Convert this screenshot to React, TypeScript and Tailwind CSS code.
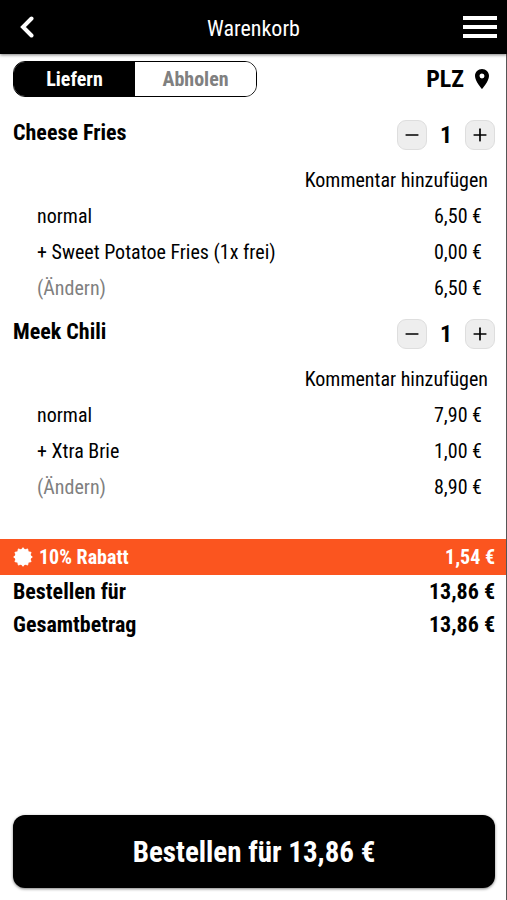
import { useState } from "react";
import { Minus, Plus } from "lucide-react";
import { MdLocationOn } from "react-icons/md";

type Line = { label: string; price: string; muted?: boolean };
type CartItem = { name: string; lines: Line[] };

const items: CartItem[] = [
  {
    name: "Cheese Fries",
    lines: [
      { label: "normal", price: "6,50 €" },
      { label: "+ Sweet Potatoe Fries (1x frei)", price: "0,00 €" },
      { label: "(Ändern)", price: "6,50 €", muted: true },
    ],
  },
  {
    name: "Meek Chili",
    lines: [
      { label: "normal", price: "7,90 €" },
      { label: "+ Xtra Brie", price: "1,00 €" },
      { label: "(Ändern)", price: "8,90 €", muted: true },
    ],
  },
];

const stepClass =
  "flex size-[30px] items-center justify-center rounded-[9px] border border-[#dedede] bg-[#eeeeee] text-black";

function Header() {
  return (
    <header className="relative z-10 flex h-[54px] items-center justify-between bg-black px-[10px] text-white shadow-[0_1px_3px_rgba(0,0,0,0.5)]">
      <button type="button" aria-label="Zurück" className="flex w-[34px] items-center justify-center">
        <svg width="16" height="22" viewBox="0 0 16 22" fill="none" stroke="currentColor" strokeWidth="4" strokeLinecap="round">
          <path d="M12.500 2.500 4 11l8.500 8.500" />
        </svg>
      </button>
      <h1 className="pt-1 text-[22px] leading-6">Warenkorb</h1>
      <button type="button" aria-label="Menü">
        <svg width="34" height="24" viewBox="0 0 34 24" fill="currentColor">
          <path d="M0 1h34v4H0zM0 10h34v4H0zM0 19h34v4H0z" />
        </svg>
      </button>
    </header>
  );
}

function Item({ item }: { item: CartItem }) {
  const [count, setCount] = useState(1);

  return (
    <section>
      <div className="flex items-start justify-between pr-[11px] pl-[13px]">
        <h2 className="text-[22px] leading-[26px] font-bold">{item.name}</h2>
        <div className="flex items-center">
          <button type="button" aria-label="Weniger" className={stepClass} onClick={() => setCount(Math.max(0, count - 1))}>
            <Minus size={20} strokeWidth={2} />
          </button>
          <span className="w-[38px] text-center text-2xl leading-[30px] font-bold">{count}</span>
          <button type="button" aria-label="Mehr" className={stepClass} onClick={() => setCount(count + 1)}>
            <Plus size={20} strokeWidth={2} />
          </button>
        </div>
      </div>
      <div className="mt-3 flex h-9 items-center justify-end pr-[18px]">
        <button type="button" className="text-xl leading-6">Kommentar hinzufügen</button>
      </div>
      <ul className="pr-6 pl-[37px] text-xl leading-9">
        {item.lines.map((line) => (
          <li key={line.label} className="flex justify-between">
            {line.muted ? (
              <button type="button" className="text-[#808080]">{line.label}</button>
            ) : (
              <span>{line.label}</span>
            )}
            <span>{line.price}</span>
          </li>
        ))}
      </ul>
    </section>
  );
}

export default function App() {
  const [mode, setMode] = useState("liefern");
  const active = "bg-black text-white";
  const inactive = "bg-white text-[#808080]";

  return (
    <div className="flex min-h-screen flex-col bg-white font-['Roboto_Condensed','Liberation_Sans_Narrow',Roboto,sans-serif] text-black">
      <Header />
      <main className="flex grow flex-col border-r border-[#555555]">
        <div className="flex items-center justify-between pt-[7px] pr-3 pl-[13px]">
          <div className="flex h-9 w-[244px] overflow-hidden rounded-xl border border-black text-xl leading-8 font-bold">
            <button type="button" className={`flex-1 ${mode === "liefern" ? active : inactive}`} onClick={() => setMode("liefern")}>
              Liefern
            </button>
            <button type="button" className={`flex-1 ${mode === "abholen" ? active : inactive}`} onClick={() => setMode("abholen")}>
              Abholen
            </button>
          </div>
          <button type="button" className="flex items-center gap-[6px] text-2xl leading-9 font-bold">
            PLZ
            <MdLocationOn size={24} />
          </button>
        </div>

        <div className="mt-[23px] flex flex-col gap-[13px]">
          {items.map((item) => (
            <Item key={item.name} item={item} />
          ))}
        </div>

        <div className="mt-[34px] flex h-9 items-center justify-between bg-[#fb551f] pr-[11px] pl-[13px] text-xl leading-[34px] font-bold text-white">
          <span className="flex items-center gap-[6px]">
            <svg
              width="20"
              height="20"
              viewBox="0 0 20 20"
              fill="currentColor"
              stroke="currentColor"
              strokeWidth="1"
              strokeLinejoin="round"
            >
              <path d="M10 .7 11.890 2.950 14.650 1.950 15.160 4.840 18.050 5.350 17.050 8.110 19.300 10 17.050 11.890 18.050 14.650 15.160 15.160 14.650 18.050 11.890 17.050 10 19.300 8.110 17.050 5.350 18.050 4.840 15.160 1.950 14.650 2.950 11.890 .7 10 2.950 8.110 1.950 5.350 4.840 4.840 5.350 1.950 8.110 2.950z" />
            </svg>
            10% Rabatt
          </span>
          <span>1,54 €</span>
        </div>
        <dl className="pr-[11px] pl-[13px] text-[22px] leading-[33px] font-bold">
          <div className="flex justify-between">
            <dt>Bestellen für</dt>
            <dd>13,86 €</dd>
          </div>
          <div className="flex justify-between">
            <dt>Gesamtbetrag</dt>
            <dd>13,86 €</dd>
          </div>
        </dl>

        <div className="mt-auto pr-[11px] pb-3 pl-[13px]">
          <button
            type="button"
            className="h-[73px] w-full rounded-xl bg-black text-[29px] leading-9 font-bold text-white shadow-[0_1px_3px_rgba(0,0,0,0.5)]"
          >
            Bestellen für 13,86 €
          </button>
        </div>
      </main>
    </div>
  );
}
